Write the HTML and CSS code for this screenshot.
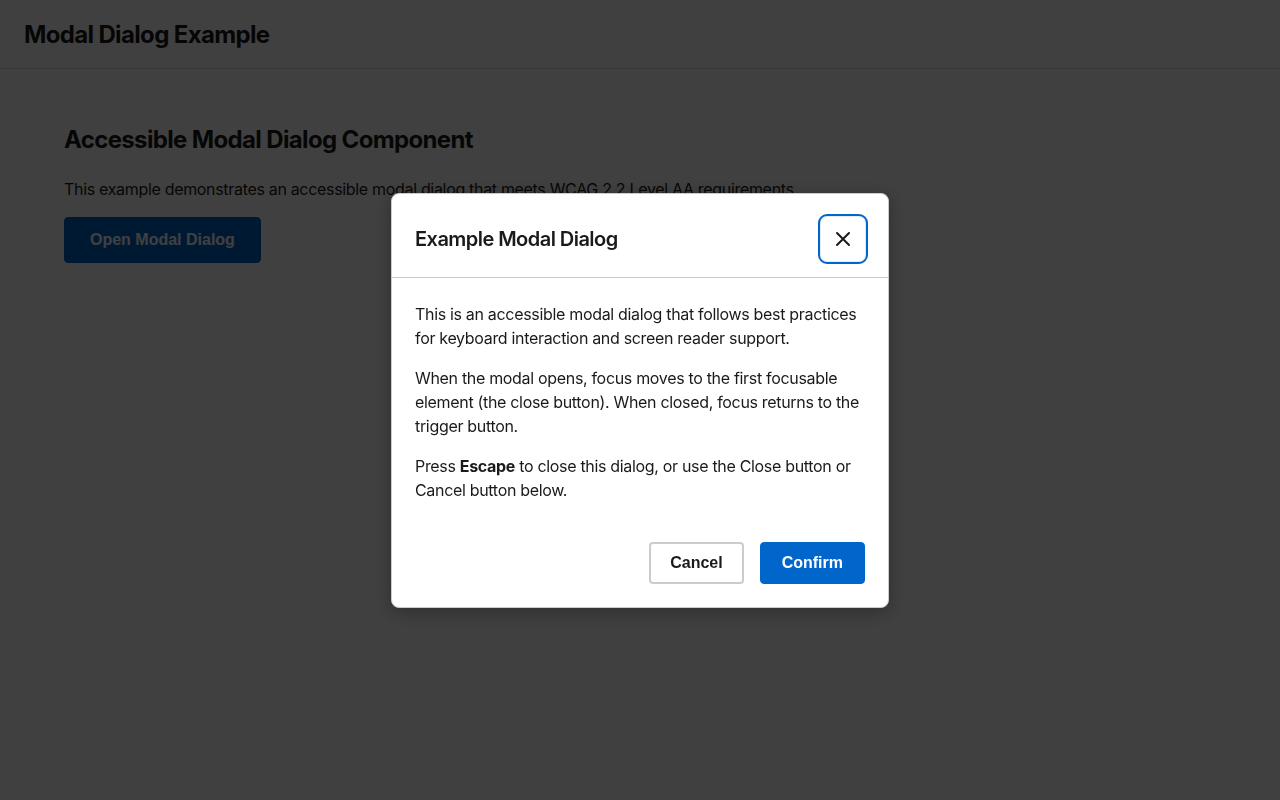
FILE: index.html
```html
<!DOCTYPE html>
<html lang="en">
  <head>
    <meta charset="utf-8" />
    <title>Modal Dialog Example</title>
    <link rel="stylesheet" href="styles.css">
  </head>

  <body>
    <header class="site-header">
      <h1>Modal Dialog Example</h1>
    </header>

    <main class="content">
      <h2>Accessible Modal Dialog Component</h2>
      <p>
        This example demonstrates an accessible modal dialog that meets WCAG 2.2
        Level AA requirements.
      </p>
      <button type="button" class="btn btn-primary" id="open-modal">
        Open Modal Dialog
      </button>
    </main>

    <div class="overlay">
      <div
        class="modal"
        role="dialog"
        aria-modal="true"
        aria-labelledby="modal-title"
      >
        <div class="modal-header">
          <h2 id="modal-title">Example Modal Dialog</h2>
          <button type="button" class="modal-close" aria-label="Close dialog">
            <svg width="18" height="18" viewBox="0 0 18 18" aria-hidden="true">
              <path
                d="M3 3 L15 15 M15 3 L3 15"
                stroke="#1a1a1a"
                stroke-width="2"
                stroke-linecap="round"
              />
            </svg>
          </button>
        </div>

        <div class="modal-body">
          <p>
            This is an accessible modal dialog that follows best practices for
            keyboard interaction and screen reader support.
          </p>
          <p>
            When the modal opens, focus moves to the first focusable element
            (the close button). When closed, focus returns to the trigger
            button.
          </p>
          <p>
            Press <strong>Escape</strong> to close this dialog, or use the Close
            button or Cancel button below.
          </p>
        </div>

        <div class="modal-footer">
          <button type="button" class="btn btn-secondary">Cancel</button>
          <button type="button" class="btn btn-primary">Confirm</button>
        </div>
      </div>
    </div>
  </body>
</html>
```

FILE: styles.css
```css
* {
  box-sizing: border-box;
}

body {
  margin: 0;
  font-family: Inter, "Noto Sans", sans-serif;
  color: #1a1a1a;
  background-color: #fff;
}

.site-header {
  height: 69px;
  padding: 0 24px;
  display: flex;
  align-items: center;
  border-bottom: 1px solid #ddd;
}

.site-header h1 {
  margin: 0;
  font-size: 24px;
  font-weight: 700;
  letter-spacing: -0.027em;
}

.content {
  padding: 57px 64px;
}

.content h2 {
  margin: 0 0 22px;
  font-size: 24px;
  font-weight: 700;
  line-height: 1.2;
  letter-spacing: -0.027em;
}

.content p {
  margin: 0 0 16px;
  font-size: 16px;
  line-height: 24px;
  letter-spacing: -0.02em;
}

.btn {
  font-family: "Liberation Sans", Arial, sans-serif;
  font-size: 16px;
  font-weight: 700;
  line-height: 18px;
  border-radius: 4px;
  cursor: pointer;
}

.content .btn {
  padding: 13px 25px;
}

.btn-primary {
  padding: 11px 21px;
  background-color: #0066cc;
  border: 1px solid #0066cc;
  color: #fff;
}

.btn-secondary {
  padding: 10px 19px;
  background-color: #fff;
  border: 2px solid #ccc;
  color: #1a1a1a;
}

.overlay {
  position: fixed;
  inset: 0;
  background-color: rgba(0, 0, 0, 0.75);
  display: flex;
  align-items: center;
  justify-content: center;
}

.modal {
  width: 498px;
  background-color: #fff;
  border: 1px solid #ccc;
  border-radius: 8px;
  box-shadow: 0 4px 20px rgba(0, 0, 0, 0.3);
}

.modal-header {
  padding: 22px 22px 15px 23px;
  display: flex;
  align-items: center;
  justify-content: space-between;
  border-bottom: 1px solid #ccc;
}

.modal-header h2 {
  margin: 0;
  font-size: 20px;
  font-weight: 600;
  letter-spacing: -0.027em;
}

.modal-close {
  width: 46px;
  height: 46px;
  padding: 0;
  display: flex;
  align-items: center;
  justify-content: center;
  background-color: #fff;
  border: 1px solid #e4ebf5;
  border-radius: 7px;
  outline: 2px solid #0066cc;
  outline-offset: 0;
  cursor: pointer;
}

.modal-body {
  padding: 24px 23px;
}

.modal-body p {
  margin: 0 0 16px;
  font-size: 16px;
  line-height: 24px;
  letter-spacing: -0.02em;
}

.modal-body p:last-child {
  margin-bottom: 0;
}

.modal-footer {
  padding: 16px 23px 23px;
  display: flex;
  justify-content: flex-end;
  gap: 16px;
}
```
